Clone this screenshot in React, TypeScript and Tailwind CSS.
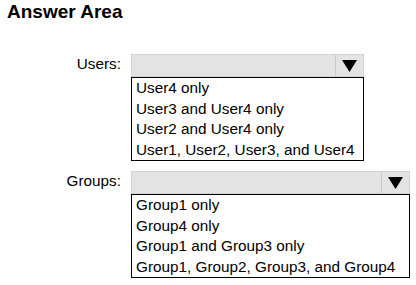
import React from 'react';

interface DropProps {
  label: string;
  options: string[];
  width: string;
}

function Dropdown({ label, options, width }: DropProps) {
  return (
    <div className="flex items-start">
      <div className="w-[122px] shrink-0 pt-[1px] pr-[1px] text-right text-[15.3px] leading-[17px] text-black">{label}</div>
      <div className={`ml-[9px] flex flex-col ${width}`}>
        <div className="flex h-[23px] border border-[#d4d4d4] bg-[#e3e3e3]">
          <div className="flex-1" />
          <div className="flex w-[28px] items-center justify-center border-l border-[#c9c9c9]">
            <svg width="15" height="12" viewBox="0 0 15 12">
              <polygon points="0,0 15,0 7.5,12" fill="#000" />
            </svg>
          </div>
        </div>
        <div className="flex flex-col border border-black bg-white px-[4px] text-[15.3px] leading-[20.5px] text-black">
          {options.map((o) => (
            <div key={o} className="whitespace-nowrap">{o}</div>
          ))}
        </div>
      </div>
    </div>
  );
}

export default function App() {
  return (
    <div className="h-[285px] w-[416px] bg-white font-['Liberation_Sans',Arial,sans-serif]">
      <div className="pl-[7px] pt-[1px] text-[19px] leading-[22px] font-bold text-black">Answer Area</div>
      <div className="mt-[31px] flex flex-col gap-[10px]">
        <Dropdown
          label="Users:"
          width="w-[233px]"
          options={['User4 only', 'User3 and User4 only', 'User2 and User4 only', 'User1, User2, User3, and User4']}
        />
        <Dropdown
          label="Groups:"
          width="w-[279px]"
          options={['Group1 only', 'Group4 only', 'Group1 and Group3 only', 'Group1, Group2, Group3, and Group4']}
        />
      </div>
    </div>
  );
}
